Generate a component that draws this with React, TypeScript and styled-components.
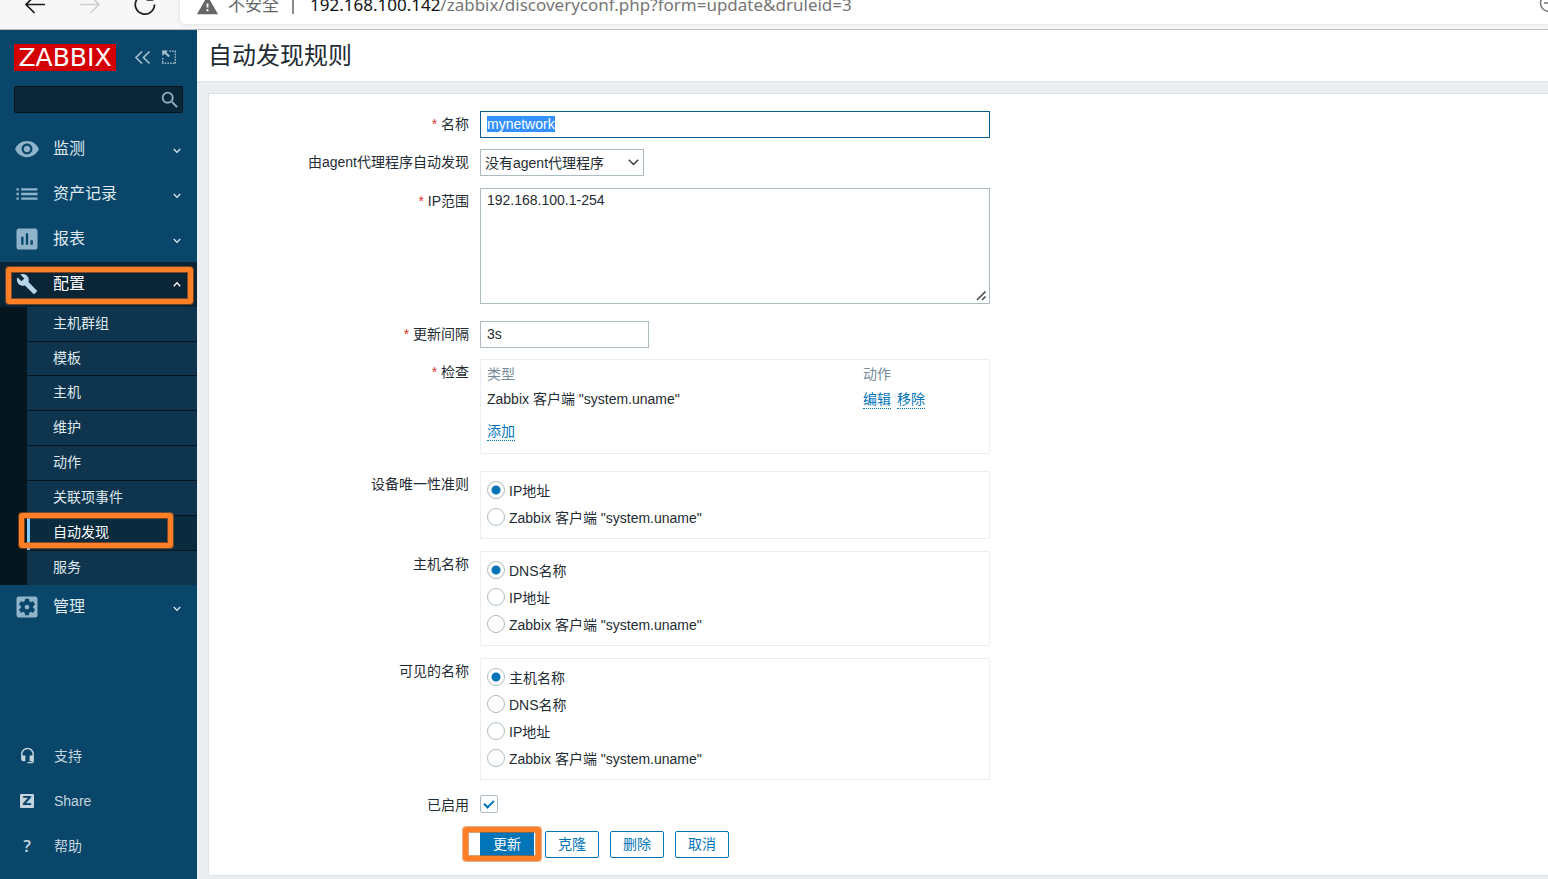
import React, { useEffect, useRef } from "react";
import styled, { createGlobalStyle, css } from "styled-components";
import {
  MdAssessment,
  MdBuild,
  MdHeadsetMic,
  MdList,
  MdSearch,
  MdSettingsApplications,
  MdVisibility,
  MdWarning,
} from "react-icons/md";

const GlobalStyle = createGlobalStyle`
  *, *::before, *::after { box-sizing: border-box; }
  body {
    margin: 0;
    background: #ebeef0;
    color: #1f2c33;
    font: 14px/18px "Liberation Sans", "Noto Sans CJK SC", sans-serif;
  }
  button, input, select, textarea { font: inherit; color: inherit; }
`;

const Page = styled.div`
  display: flex;
  flex-direction: column;
  min-height: 100vh;
  overflow-x: hidden;
`;

/* Browser toolbar */

const BrowserBar = styled.div`
  display: flex;
  align-items: flex-end;
  flex: none;
  height: 30px;
  overflow: hidden;
  background: #f7f7f7;
  border-bottom: 1px solid #bbbcbc;
`;

const BrowserButtons = styled.div`
  display: flex;
  align-items: center;
  gap: 31px;
  width: 180px;
  height: 38px;
  margin-bottom: 5px;
  padding-left: 23px;
`;

const BrowserButton = styled.button<{ $dim?: boolean }>`
  display: flex;
  padding: 0;
  border: 0;
  background: none;
  color: ${(p) => (p.$dim ? "#cfcfcf" : "#1b1b1b")};
`;

const AddressBar = styled.div`
  display: flex;
  flex: 1;
  align-items: center;
  height: 38px;
  margin-bottom: 5px;
  padding-left: 16px;
  border-radius: 6px 0 0 6px;
  background: #fff;
  box-shadow: 0 0 5px rgba(0, 0, 0, 0.12);
  color: #767676;
  font: 17px/24px "Noto Sans", "Noto Sans CJK SC", sans-serif;
  white-space: nowrap;
`;

const Insecure = styled.span`
  display: flex;
  align-items: center;
  gap: 9px;
  padding-right: 13px;
  color: #666;
`;

const Url = styled.span`
  flex: 1;
  padding-left: 16px;
`;

const Divider = styled.span`
  width: 2px;
  height: 18px;
  background: #8a8a8a;
`;

const Host = styled.span`
  color: #111;
`;

const ZoomIcon = styled.svg`
  margin-right: -12px;
`;

/* Shared pieces */

const Body = styled.div`
  display: flex;
  flex: 1;
`;

const Highlight = styled.span<{ $inset: string }>`
  position: absolute;
  inset: ${(p) => p.$inset};
  z-index: 2;
  border: 5px solid #ff7f27;
  border-radius: 3px;
  box-shadow: 0 0 0 1px rgba(200, 95, 25, 0.5), inset 0 0 0 1px rgba(200, 95, 25, 0.6);
  pointer-events: none;
`;

/* Sidebar */

const Sidebar = styled.aside`
  display: flex;
  flex: none;
  flex-direction: column;
  width: 197px;
  padding: 14px 0 11px;
  background: #0a466a;
  color: #dfe9ef;
`;

const Brand = styled.div`
  display: flex;
  align-items: center;
  height: 27px;
  padding-left: 14px;
`;

const Logo = styled.a`
  width: 102px;
  margin-right: 18px;
  background: #d40000;
  color: #fff;
  font: 25px/27px "DejaVu Sans", sans-serif;
  text-align: center;
  text-decoration: none;
`;

const BrandButton = styled.button`
  display: flex;
  margin-right: 10px;
  padding: 0;
  border: 0;
  background: none;
  color: #a3bfd0;
`;

const Search = styled.form`
  display: flex;
  align-items: center;
  height: 27px;
  margin: 15px 14px 14px;
  padding-right: 1px;
  border: 1px solid #04141d;
  border-radius: 2px;
  background: #0a2738;
`;

const SearchInput = styled.input`
  flex: 1;
  min-width: 0;
  padding: 0 6px;
  border: 0;
  outline: 0;
  background: none;
`;

const SearchButton = styled.button`
  display: flex;
  padding: 0;
  border: 0;
  background: none;
  color: #8fb0c4;
`;

const MenuItem = styled.a<{ $open?: boolean }>`
  position: relative;
  display: flex;
  flex: none;
  align-items: center;
  height: 45px;
  padding: 0 15px 2px 13px;
  background: ${(p) => (p.$open ? "#0a2536" : "transparent")};
  color: ${(p) => (p.$open ? "#fff" : "#dfe9ef")};
  font-size: 16px;
  text-decoration: none;
`;

const MenuIcon = styled.span<{ $open?: boolean }>`
  display: flex;
  align-items: center;
  justify-content: center;
  width: 28px;
  margin-right: 12px;
  color: ${(p) => (p.$open ? "#b5d5ea" : "#8fb3ca")};
`;

const MenuText = styled.span`
  flex: 1;
`;

const SubMenu = styled.nav`
  display: flex;
  flex-direction: column;
  padding-left: 27px;
  background: #05161f;
`;

const SubItem = styled.a<{ $active?: boolean }>`
  position: relative;
  height: 35px;
  padding-left: 26px;
  border-top: 1px solid #05161f;
  background: #0f344d;
  color: #dfe9ef;
  line-height: 32px;
  text-decoration: none;

  &:nth-child(-n + 2) {
    height: 34px;
  }

  &:first-child {
    border-top: 0;
  }

  ${(p) =>
    p.$active &&
    css`
      background: #0a2a3d;
      box-shadow: inset 3px 0 0 #80ccff;
      color: #fff;
    `}
`;

const Footer = styled.nav`
  margin-top: auto;
`;

const FooterItem = styled.a`
  display: flex;
  align-items: center;
  height: 45px;
  padding-left: 20px;
  color: #c4d5df;
  text-decoration: none;
`;

const FooterIcon = styled.span`
  display: flex;
  align-items: center;
  justify-content: center;
  width: 14px;
  margin-right: 20px;
  font: 600 17px/18px "Open Sans", sans-serif;

  svg {
    flex: none;
  }
`;

const ShareBadge = styled.span`
  width: 14px;
  height: 14px;
  border-radius: 1px;
  background: #c4d5df;
  color: #0a466a;
  font: 700 13px/14px "DejaVu Sans", sans-serif;
  text-align: center;
`;

/* Main content */

const Main = styled.main`
  flex: 1;
  min-width: 0;
  padding-bottom: 3px;
`;

const Header = styled.header`
  height: 52px;
  padding-left: 11px;
  border-bottom: 1px solid #dfe4e7;
  background: #fff;
`;

const Title = styled.h1`
  margin: 0;
  font-size: 24px;
  font-weight: 400;
  line-height: 51px;
`;

const Card = styled.form`
  display: flex;
  flex-direction: column;
  margin: 11px 0 0 11px;
  padding: 17px 0;
  border: 1px solid #dfe4e7;
  border-right: 0;
  background: #fff;
`;

const Row = styled.div<{ $after?: 0 | 11 | 12 | 17 }>`
  display: grid;
  grid-template-columns: 260px minmax(0, 510px);
  column-gap: 11px;
  margin-bottom: ${(p) => p.$after ?? 12}px;
`;

const labelStyle = css`
  line-height: 27px;
  text-align: right;
`;

const Label = styled.label`
  ${labelStyle}
`;

const GroupLabel = styled.span`
  ${labelStyle}
`;

const Star = styled.span`
  color: #e33734;
`;

const TextInput = styled.input<{ $short?: boolean }>`
  width: ${(p) => (p.$short ? "169px" : "100%")};
  height: 27px;
  padding: 0 6px 2px;
  border: 1px solid #acbbc2;
  border-radius: 0;
  outline: 0;

  &:focus {
    border-color: #0a5f8f;
  }

  &::selection {
    background: #3390ff;
    color: #fff;
  }
`;

const AreaBox = styled.span`
  position: relative;
  display: block;

  svg {
    position: absolute;
    right: 3px;
    bottom: 3px;
    pointer-events: none;
  }
`;

const TextArea = styled.textarea`
  display: block;
  width: 100%;
  height: 116px;
  padding: 2px 6px;
  border: 1px solid #acbbc2;
  outline: 0;
  resize: none;
`;

const SelectBox = styled.span`
  position: relative;
  display: flex;
  width: 164px;

  svg {
    position: absolute;
    top: 9px;
    right: 5px;
    pointer-events: none;
  }
`;

const Select = styled.select`
  width: 100%;
  height: 27px;
  padding: 0 4px;
  border: 1px solid #acbbc2;
  border-radius: 0;
  outline: 0;
  background: #fff;
  appearance: none;
`;

const CheckBox = styled.div`
  height: 95px;
  padding: 1px 6px;
  border: 1px solid #ebeef0;
`;

const Table = styled.table`
  width: 100%;
  border-collapse: collapse;
  table-layout: fixed;

  th,
  td {
    height: 25px;
    padding: 0;
    text-align: left;
  }

  th {
    color: #768d99;
    font-weight: 400;
  }

  tfoot td {
    height: 40px;
  }
`;

const ActionHead = styled.th`
  width: 120px;
`;

const Link = styled.a`
  margin-right: 6px;
  padding-bottom: 1px;
  border-bottom: 1px dotted #0275b8;
  color: #0275b8;
  text-decoration: none;
`;

const RadioBox = styled.div`
  padding: 5px 6px 7px;
  border: 1px solid #ebeef0;
`;

const RadioLabel = styled.label`
  display: flex;
  align-items: center;
  gap: 4px;
  height: 27px;
`;

const Radio = styled.input`
  width: 18px;
  height: 18px;
  margin: 0 0 1px;
  border: 1px solid #acbbc2;
  border-radius: 50%;
  background: #fff;
  appearance: none;

  &:checked {
    background: radial-gradient(circle, #0275b8 4px, #fff 5px);
  }
`;

const Tick = styled.input`
  position: relative;
  width: 18px;
  height: 18px;
  margin: 3px 0 6px;
  border: 1px solid #acbbc2;
  border-radius: 2px;
  background: #fff;
  appearance: none;

  &:checked::before {
    content: "";
    position: absolute;
    top: 4px;
    left: 3px;
    width: 10px;
    height: 6px;
    border: solid #0275b8;
    border-width: 0 0 2px 2px;
    transform: rotate(-45deg);
  }
`;

const Buttons = styled.div`
  display: flex;
  grid-column: 2;
  gap: 11px;
`;

const ButtonSlot = styled.span`
  position: relative;
  display: flex;
`;

const Button = styled.button<{ $primary?: boolean }>`
  height: 27px;
  padding: 0 12px 2px;
  border: 1px solid #0275b8;
  border-radius: 2px;
  background: ${(p) => (p.$primary ? "#0275b8" : "#fff")};
  color: ${(p) => (p.$primary ? "#fff" : "#0275b8")};
  white-space: nowrap;
`;

function Chevron({ up }: { up?: boolean }) {
  return (
    <svg width="10" height="10" viewBox="0 0 10 10" fill="none" stroke="currentColor" strokeWidth="1.3">
      <path d={up ? "M1.8 7.2 5 3.8l3.2 3.4" : "M1.8 5 5 8.4 8.2 5"} />
    </svg>
  );
}

const menu = [
  { text: "监测", icon: <MdVisibility size={26} /> },
  { text: "资产记录", icon: <MdList size={28} /> },
  { text: "报表", icon: <MdAssessment size={28} /> },
];

const subMenu = ["主机群组", "模板", "主机", "维护", "动作", "关联项事件", "自动发现", "服务"];

const uname = 'Zabbix 客户端 "system.uname"';

const radioGroups = [
  { name: "uniqueness", label: "设备唯一性准则", options: ["IP地址", uname] },
  { name: "host", label: "主机名称", options: ["DNS名称", "IP地址", uname] },
  { name: "visible", label: "可见的名称", options: ["主机名称", "DNS名称", "IP地址", uname] },
];

function Toolbar() {
  return (
    <BrowserBar>
      <BrowserButtons>
        <BrowserButton aria-label="后退">
          <svg width="24" height="24" fill="none" stroke="currentColor" strokeWidth="1.7">
            <path d="M22 11.500H3M11.500 3 3 11.500l8.500 8.500" />
          </svg>
        </BrowserButton>
        <BrowserButton aria-label="前进" $dim>
          <svg width="24" height="24" fill="none" stroke="currentColor" strokeWidth="1.7">
            <path d="M2 11.500h19M12.500 3l8.500 8.500-8.500 8.500" />
          </svg>
        </BrowserButton>
        <BrowserButton aria-label="刷新">
          <svg width="24" height="24" fill="none" stroke="currentColor" strokeWidth="1.7">
            <path d="M21.500 11.500a9.600 9.600 0 1 1-3-6.900M19.500 1v6h-6" />
          </svg>
        </BrowserButton>
      </BrowserButtons>
      <AddressBar>
        <Insecure>
          <MdWarning size={23} />
          不安全
        </Insecure>
        <Divider />
        <Url>
          <Host>192.168.100.142</Host>/zabbix/discoveryconf.php?form=update&amp;druleid=3
        </Url>
        <ZoomIcon width="22" height="22" fill="none" stroke="#767676" strokeWidth="1.5">
          <circle cx="11" cy="9" r="8.5" />
          <path d="M6 9h10" />
        </ZoomIcon>
      </AddressBar>
    </BrowserBar>
  );
}

function Navigation() {
  return (
    <Sidebar>
      <Brand>
        <Logo href="#">ZABBIX</Logo>
        <BrandButton aria-label="收起">
          <svg width="18" height="16" fill="none" stroke="currentColor" strokeWidth="1.7">
            <path d="M8 1.500 2 7.500l6 6M15.500 1.500l-6 6 6 6" />
          </svg>
        </BrandButton>
        <BrandButton aria-label="全屏">
          <svg width="16" height="16" fill="none" stroke="currentColor" strokeWidth="1.4">
            <path d="M7.500 1.200H14M13.300 1v13M.7 8v6M0 13.300h14" strokeDasharray="1.500 1.200" />
            <path d="M0 .5h6L4.300 2.200l3.600 3.600-1.500 1.500-3.600-3.600L.5 6z" fill="currentColor" stroke="none" />
          </svg>
        </BrandButton>
      </Brand>
      <Search>
        <SearchInput type="text" aria-label="搜索" />
        <SearchButton type="button" aria-label="搜索">
          <MdSearch size={22} />
        </SearchButton>
      </Search>
      {menu.map((item) => (
        <MenuItem href="#" key={item.text}>
          <MenuIcon>{item.icon}</MenuIcon>
          <MenuText>{item.text}</MenuText>
          <Chevron />
        </MenuItem>
      ))}
      <MenuItem href="#" $open>
        <MenuIcon $open>
          <MdBuild size={22} />
        </MenuIcon>
        <MenuText>配置</MenuText>
        <Chevron up />
        <Highlight $inset="5px 4px 3px 6px" />
      </MenuItem>
      <SubMenu>
        {subMenu.map((text) => (
          <SubItem href="#" key={text} $active={text === "自动发现"}>
            {text}
            {text === "自动发现" && <Highlight $inset="-3px 24px 2px -8px" />}
          </SubItem>
        ))}
      </SubMenu>
      <MenuItem href="#">
        <MenuIcon>
          <MdSettingsApplications size={28} />
        </MenuIcon>
        <MenuText>管理</MenuText>
        <Chevron />
      </MenuItem>
      <Footer>
        <FooterItem href="#">
          <FooterIcon>
            <MdHeadsetMic size={17} />
          </FooterIcon>
          支持
        </FooterItem>
        <FooterItem href="#">
          <FooterIcon>
            <ShareBadge>Z</ShareBadge>
          </FooterIcon>
          Share
        </FooterItem>
        <FooterItem href="#">
          <FooterIcon>?</FooterIcon>
          帮助
        </FooterItem>
      </Footer>
    </Sidebar>
  );
}

export default function App() {
  const nameRef = useRef<HTMLInputElement>(null);

  useEffect(() => {
    nameRef.current?.focus();
    nameRef.current?.select();
  }, []);

  return (
    <Page>
      <GlobalStyle />
      <Toolbar />
      <Body>
        <Navigation />
        <Main>
          <Header>
            <Title>自动发现规则</Title>
          </Header>
          <Card onSubmit={(e) => e.preventDefault()}>
            <Row $after={11}>
              <Label htmlFor="name">
                <Star>*</Star> 名称
              </Label>
              <TextInput id="name" ref={nameRef} defaultValue="mynetwork" />
            </Row>
            <Row>
              <Label htmlFor="proxy">由agent代理程序自动发现</Label>
              <SelectBox>
                <Select id="proxy">
                  <option>没有agent代理程序</option>
                </Select>
                <svg width="11" height="9" fill="none" stroke="#383838" strokeWidth="1.4">
                  <path d="M.8 1.800 5.500 6.500l4.700-4.700" />
                </svg>
              </SelectBox>
            </Row>
            <Row $after={17}>
              <Label htmlFor="range">
                <Star>*</Star> IP范围
              </Label>
              <AreaBox>
                <TextArea id="range" defaultValue="192.168.100.1-254" />
                <svg width="11" height="11" fill="none" stroke="#4a4a4a" strokeWidth="1.6">
                  <path d="M1 10 9.500 1.500M6 10l3.500-3.500" />
                </svg>
              </AreaBox>
            </Row>
            <Row $after={11}>
              <Label htmlFor="delay">
                <Star>*</Star> 更新间隔
              </Label>
              <TextInput id="delay" defaultValue="3s" $short />
            </Row>
            <Row $after={17}>
              <GroupLabel>
                <Star>*</Star> 检查
              </GroupLabel>
              <CheckBox>
                <Table>
                  <thead>
                    <tr>
                      <th>类型</th>
                      <ActionHead>动作</ActionHead>
                    </tr>
                  </thead>
                  <tbody>
                    <tr>
                      <td>{uname}</td>
                      <td>
                        <Link href="#">编辑</Link>
                        <Link href="#">移除</Link>
                      </td>
                    </tr>
                  </tbody>
                  <tfoot>
                    <tr>
                      <td colSpan={2}>
                        <Link href="#">添加</Link>
                      </td>
                    </tr>
                  </tfoot>
                </Table>
              </CheckBox>
            </Row>
            {radioGroups.map((group) => (
              <Row key={group.name} role="radiogroup" aria-labelledby={`${group.name}-label`}>
                <GroupLabel id={`${group.name}-label`}>{group.label}</GroupLabel>
                <RadioBox>
                  {group.options.map((option, i) => (
                    <RadioLabel key={option}>
                      <Radio type="radio" name={group.name} defaultChecked={i === 0} />
                      {option}
                    </RadioLabel>
                  ))}
                </RadioBox>
              </Row>
            ))}
            <Row>
              <Label htmlFor="enabled">已启用</Label>
              <Tick id="enabled" type="checkbox" defaultChecked />
            </Row>
            <Row $after={0}>
              <Buttons>
                <ButtonSlot>
                  <Button $primary>更新</Button>
                  <Highlight $inset="-4px -7px -3px -17px" />
                </ButtonSlot>
                <Button type="button">克隆</Button>
                <Button type="button">删除</Button>
                <Button type="button">取消</Button>
              </Buttons>
            </Row>
          </Card>
        </Main>
      </Body>
    </Page>
  );
}
